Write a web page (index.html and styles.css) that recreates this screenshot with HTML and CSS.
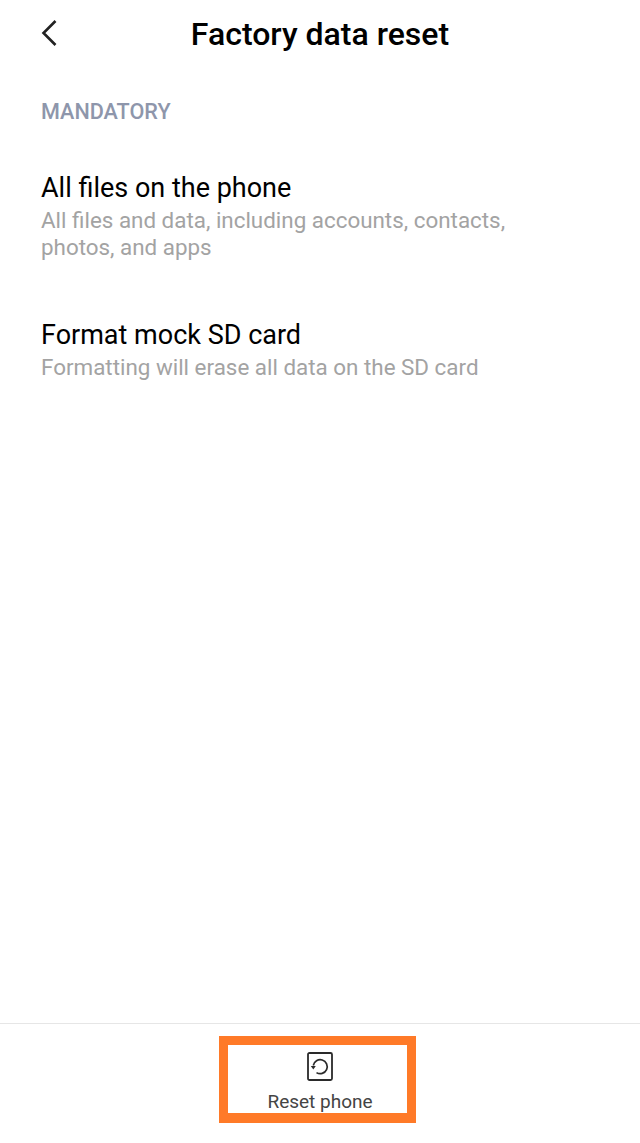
FILE: index.html
```html
<!DOCTYPE html>
<html lang="en">
<head>
  <meta charset="UTF-8">
  <title>Factory data reset</title>
  <link rel="stylesheet" href="styles.css">
</head>
<body>
  <div class="page">
    <div class="header">
      <svg class="back" width="18" height="30" viewBox="0 0 18 30"><path d="M15.5 3 L3.5 15 L15.5 27" fill="none" stroke="#222" stroke-width="2.6"/></svg>
      <h1>Factory data reset</h1>
    </div>
    <div class="section">MANDATORY</div>
    <div class="item first">
      <div class="item-title">All files on the phone</div>
      <div class="item-desc">All files and data, including accounts, contacts, photos, and apps</div>
    </div>
    <div class="item">
      <div class="item-title">Format mock SD card</div>
      <div class="item-desc">Formatting will erase all data on the SD card</div>
    </div>
    <div class="footer">
      <div class="reset-button">
        <svg width="26" height="29" viewBox="0 0 26 29"><rect x="1" y="1" width="24" height="27" rx="1.5" fill="none" stroke="#2a2a2a" stroke-width="1.8"/><path d="M6.3 13.5 A7 7 0 1 1 9.5 20.6" fill="none" stroke="#2a2a2a" stroke-width="1.7"/><path d="M3.8 14 L8.8 14 L6.3 17.6 Z" fill="#2a2a2a"/></svg>
        <span>Reset phone</span>
      </div>
    </div>
  </div>
</body>
</html>
```

FILE: styles.css
```css
body {
  margin: 0;
  font-family: Roboto, 'Noto Sans', sans-serif;
  background-color: #fff;
}
.page {
  height: 1143px;
  display: flex;
  flex-direction: column;
  overflow: hidden;
}
.header {
  position: relative;
  height: 68px;
  display: flex;
  align-items: center;
  justify-content: center;
}
.back {
  position: absolute;
  left: 40px;
  top: 18px;
}
h1 {
  margin: 0;
  font-size: 32px;
  font-weight: 500;
  color: #000;
}
.section {
  margin: 31px 0 0 41px;
  font-size: 21.6px;
  font-weight: 500;
  color: #8e96ab;
}
.item {
  padding: 0 41px;
  margin-top: 56px;
}
.item.first {
  margin-top: 46px;
}
.item-title {
  font-size: 27px;
  color: #000;
  line-height: 37px;
}
.item-desc {
  font-size: 22.4px;
  line-height: 27px;
  color: #a3a3a3;
  max-width: 500px;
}
.footer {
  margin-top: auto;
  height: 120px;
  border-top: 1px solid #e6e6e6;
  box-sizing: border-box;
  display: flex;
  justify-content: center;
}
.reset-button {
  width: 197px;
  height: 87px;
  margin: 12px 5px 0 0;
  padding: 7px 0 0 5px;
  box-sizing: border-box;
  border: 9px solid #ff7a28;
  border-bottom-width: 10px;
  display: flex;
  flex-direction: column;
  align-items: center;
  gap: 9px;
  font-size: 19px;
  color: #444;
}
```
